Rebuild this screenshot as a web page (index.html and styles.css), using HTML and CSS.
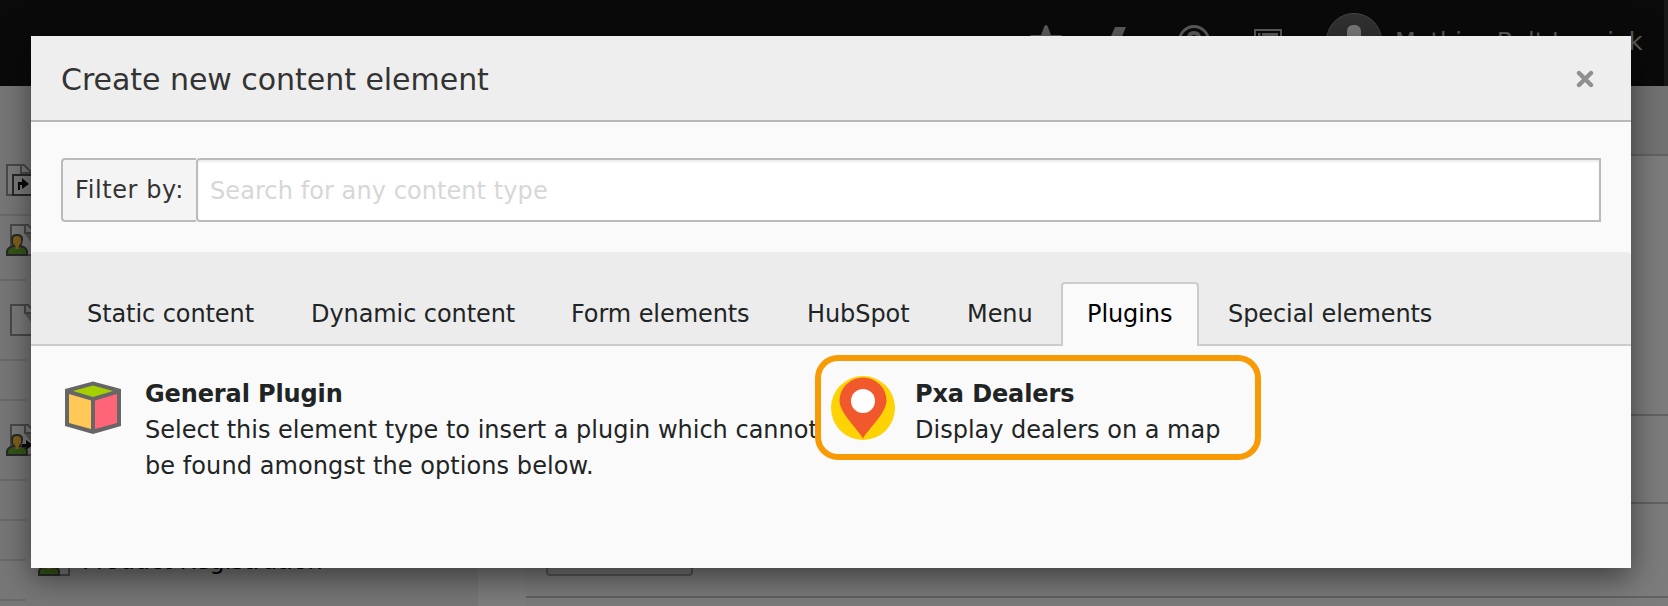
FILE: index.html
```html
<!DOCTYPE html>
<html lang="en">
<head>
<meta charset="utf-8">
<title>Create new content element</title>
<link rel="stylesheet" href="styles.css">
</head>
<body>
<svg width="0" height="0" class="defs">
  <defs>
    <g id="page"><path d="M1 1H18L27 10V31H1Z" fill="#7b7b7b" stroke="#494949" stroke-width="2"/><path d="M14 9L27 26V10H14Z" fill="#5c5c5c"/><path d="M15 1V9H27" fill="none" stroke="#494949" stroke-width="2"/></g>
    <g id="user"><path d="M1 31V27Q2 23 8 22Q6 19 6 15Q6 11 11 11Q16 11 16 15Q16 19 14 22Q20 23 21 27V31Z" fill="#345418" stroke="#292929" stroke-width="2"/><path d="M7 14Q11 10 15 14V19L12.500 22V25H9.500V22L7 19Z" fill="#80601c"/></g>
  </defs>
</svg>
<div class="app">
  <header class="topbar">
    <div class="tools">
      <svg class="tool star" viewBox="0 0 32 32"><path d="M14.500 1Q16 -1 17.500 1L21 10H32L23 19L26 32L16 25L6 32L9 19L0 10H11Z"/></svg>
      <svg class="tool bolt" viewBox="0 0 24 32"><path d="M13 0H24L19 12H24L6 32L11 16H6Z"/></svg>
      <svg class="tool help" viewBox="0 0 32 32"><circle cx="16" cy="16" r="14.500" fill="none" stroke="#5c5c5c" stroke-width="3"/><path d="M11 13Q11 8 16 8Q21 8 21 13Q21 16 16 19" fill="none" stroke="#5c5c5c" stroke-width="4"/></svg>
      <svg class="tool list" viewBox="0 0 28 28"><path d="M1 1H27V27H1Z" fill="none" stroke="#5c5c5c" stroke-width="2"/><path d="M4 4H6.500V24H4ZM8 4H24V24H8Z"/></svg>
    </div>
    <div class="avatar"><svg viewBox="0 0 54 54"><rect x="20" y="11" width="14" height="26" rx="6" fill="#7a7a7a"/></svg></div>
    <span class="username">Mathias Bolt Lesniak</span>
  </header>
  <div class="workspace">
    <aside class="tree">
      <div class="row r1"><svg class="ico" viewBox="0 0 32 32"><use href="#page"/><path d="M7 11H31V31H7Z" fill="#7b7b7b" stroke="#292929" stroke-width="2"/><path d="M12 26V18H16V14L23 20L16 25V21H14V26Z" fill="#0a0a0a"/></svg></div>
      <div class="row r2"><svg class="ico" viewBox="0 0 32 32"><g transform="translate(4)"><use href="#page"/></g><use href="#user"/></svg></div>
      <div class="row r3"><svg class="ico" viewBox="0 0 32 32"><use href="#page"/></svg></div>
      <div class="row r4"></div>
      <div class="row r5"><svg class="ico" viewBox="0 0 32 32"><g transform="translate(4)"><use href="#page"/></g><use href="#user"/><path d="M16 20H20V16L27 21L20 26V23H16Z" fill="#0a0a0a"/></svg></div>
      <div class="row r4"></div>
      <div class="row r4"></div>
      <div class="row r8"><svg class="ico" viewBox="0 0 32 32"><g transform="translate(4)"><use href="#page"/></g><use href="#user"/></svg><span class="node">Product Registration</span></div>
    </aside>
    <div class="gutter"></div>
    <main class="content">
      <div class="band b1"></div><div class="band b2"></div><div class="band b3"></div>
      <div class="band b4"><div class="ghost-button"></div></div>
    </main>
  </div>
</div>

<section class="modal">
  <header class="modal-header">
    <h1 class="modal-title">Create new content element</h1>
    <svg class="close" viewBox="0 0 18 18"><path d="M3 3L15 15M15 3L3 15" stroke="#8f8f8f" stroke-width="4.400" stroke-linecap="round"/></svg>
  </header>
  <div class="filter">
    <label class="filter-label" for="q">Filter by:</label>
    <input id="q" class="filter-input" placeholder="Search for any content type">
  </div>
  <nav class="tabs">
    <a class="tab t1">Static content</a><a class="tab t2">Dynamic content</a><a class="tab t3">Form elements</a><a class="tab t4">HubSpot</a><a class="tab t5">Menu</a><a class="tab t6 active">Plugins</a><a class="tab t7">Special elements</a>
  </nav>
  <div class="items">
    <article class="item">
      <svg class="item-icon" viewBox="0 0 64 64"><path d="M4 13L32 5.500L60 13V50L32 58L4 50Z" fill="#666"/><path d="M12 15L32 9.500L52 15L32 21Z" fill="#a5d000"/><path d="M8 18L30 24.500V53L8 47Z" fill="#ffc857"/><path d="M34 24.500L56 18V47L34 53Z" fill="#ff6477"/></svg>
      <div class="item-body"><strong class="item-title">General Plugin</strong><p class="item-text">Select this element type to insert a plugin which cannot</p><p class="item-text last">be found amongst the options below.</p></div>
    </article>
    <article class="item">
      <svg class="item-icon" viewBox="0 0 64 64"><circle cx="32" cy="32" r="32" fill="#fdd306"/><path d="M32 62.500C26 52 8.500 37 8.500 24.500A23.500 23 0 0 1 55.500 24.500C55.500 37 38 52 32 62.500Z" fill="#f1592d"/><circle cx="32" cy="25" r="12" fill="#fff"/></svg>
      <div class="item-body"><strong class="item-title">Pxa Dealers</strong><p class="item-text">Display dealers on a map</p></div>
    </article>
  </div>
  <div class="highlight"></div>
</section>
</body>
</html>
```
FILE: styles.css
```css
* { box-sizing: border-box; }
body { margin: 0; width: 1668px; height: 606px; overflow: hidden; position: relative; background: #7e7e7e; font-family: Verdana, "DejaVu Sans", sans-serif; font-size: 24px; color: #212424; }
.defs { display: block; }
.app { height: 606px; overflow: hidden; }
.topbar { height: 86px; background: #0a0a0a; border-right: 4px solid #181818; display: flex; justify-content: flex-end; padding: 13px 22px 0 0; }
.tools { display: flex; padding-top: 12px; }
.tool { height: 32px; fill: #5c5c5c; flex: none; }
.star { width: 32px; margin-right: 40px; }
.bolt { width: 24px; margin: 2px 52px 0 0; }
.help { width: 32px; margin-right: 44px; }
.list { width: 28px; height: 28px; margin: 4px 44px 0 0; }
.avatar { width: 56px; height: 56px; flex: none; border-radius: 50%; background: #303030; border: 1px solid #484848; margin-right: 13px; }
.username { width: 247px; color: #5c5c5c; padding-top: 14px; line-height: 30px; white-space: nowrap; letter-spacing: .03px; }
.workspace { display: flex; height: 520px; }
.tree { width: 478px; background: #777; }
.row { border-bottom: 2px solid #6a6a6a; display: flex; align-items: flex-start; width: 26px; padding-left: 6px; }
.r1 { width: 100%; height: 130px; padding-top: 78px; }
.r2 { height: 65px; padding-top: 8px; }
.r3 { height: 80px; padding: 23px 0 0 10px; }
.r4 { height: 40px; }
.r5 { height: 80px; padding-top: 23px; }
.r8 { height: 40px; padding: 0 0 0 38px; border-bottom: 0; border-image: none; background: linear-gradient(#6a6a6a, #6a6a6a) 0 38px / 26px 2px no-repeat; width: 400px; }
.r8 .ico { margin-top: -17px; }
.ico { width: 32px; height: 32px; flex: none; }
.node { color: #000; white-space: nowrap; line-height: 28px; margin: -14px 0 0 12px; letter-spacing: -.15px; }
.gutter { width: 48px; background: #7e7e7e; }
.content { flex: 1; background: #7c7c7c; }
.band { border-bottom: 2px solid #626262; }
.b1 { height: 70px; background: #727272; }
.b2 { height: 260px; }
.b3 { height: 88px; }
.b4 { height: 94px; padding-left: 20px; }
.ghost-button { width: 147px; height: 72px; border: 2px solid #555; border-radius: 4px; background: #777; }

.modal { position: absolute; left: 31px; top: 36px; width: 1600px; height: 532px; background: #fafafa; box-shadow: 0 10px 30px rgba(0,0,0,.5); }
.modal-header { height: 86px; background: #eee; border-bottom: 2px solid #b8b8b8; display: flex; align-items: center; justify-content: space-between; padding: 2px 37px 0 30px; }
.modal-title { margin: 0; padding-top: 2px; font-size: 30px; line-height: 40px; font-weight: 400; color: #333; letter-spacing: -.04px; }
.close { width: 18px; height: 18px; }
.filter { display: flex; height: 130px; padding: 36px 30px 30px; }
.filter-label { width: 135px; border: 2px solid #bbb; border-right: 0; border-radius: 4px 0 0 4px; background: #f4f4f4; color: #333; padding-left: 12px; line-height: 60px; white-space: nowrap; letter-spacing: .6px; }
.filter-input { flex: 1; min-width: 0; border: 2px solid #bbb; border-radius: 4px 0 0 4px; background: #fff; box-shadow: inset 0 2px 2px rgba(0,0,0,.075); padding: 2px 12px 0; font: inherit; letter-spacing: .08px; outline: 0; }
.filter-input::placeholder { color: #d7d7d7; opacity: 1; }
.tabs { height: 94px; background: #ececec; border-bottom: 2px solid #ccc; border-radius: 4px 4px 0 0; padding: 30px 0 0 30px; display: flex; letter-spacing: -.08px; }
.tab { height: 64px; border: 2px solid transparent; border-bottom: 0; padding: 0 0 0 24px; line-height: 60px; white-space: nowrap; flex: none; }
.t1 { width: 224px; } .t2 { width: 260px; } .t3 { width: 236px; } .t4 { width: 160px; } .t5 { width: 120px; } .t6 { width: 138px; margin-right: 3px; } .t7 { width: 260px; }
.active { background: #fafafa; border-color: #ccc; border-radius: 4px 4px 0 0; color: #000; }
.items { display: flex; padding: 30px 0 0 30px; }
.item { display: flex; width: 770px; gap: 20px; }
.item-icon { width: 64px; height: 64px; flex: none; }
.item-body { line-height: 36px; white-space: nowrap; }
.item-title { display: block; letter-spacing: -.12px; }
.item-text { margin: 0; }
.last { letter-spacing: .07px; }
.highlight { position: absolute; left: 784px; top: 319px; width: 446px; height: 105px; border: 6px solid #f79a03; border-radius: 23px; }
```
